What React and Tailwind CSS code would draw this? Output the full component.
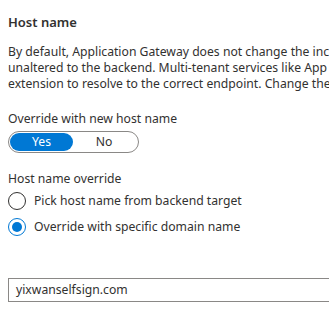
export default function App() {
  return (
    <div className="w-[329px] h-[313px] overflow-hidden bg-white text-[#323130] pl-[8px] font-['Noto_Sans',sans-serif]">
      <div className="pt-[12px] text-[13px] leading-[20px] font-semibold">Host name</div>
      <div className="mt-[12px] text-[12.2px] leading-[16px] whitespace-nowrap overflow-hidden">
        <div>By default, Application Gateway does not change the incoming</div>
        <div>unaltered to the backend. Multi-tenant services like App Service</div>
        <div>extension to resolve to the correct endpoint. Change these</div>
      </div>
      <div className="mt-[19px] text-[12.2px] leading-[16px]">Override with new host name</div>
      <div className="mt-[4px] w-[131px] h-[22px] rounded-full border border-[#8a8886] flex items-center px-[1px]">
        <div className="w-[63px] h-[18px] rounded-full bg-[#0078d4] text-white text-[12.2px] leading-[18px] flex items-center justify-center">Yes</div>
        <div className="flex-1 text-[12.2px] leading-[18px] text-center pr-[2px]">No</div>
      </div>
      <div className="mt-[18px] text-[12.2px] leading-[16px]">Host name override</div>
      <div className="mt-[5px] flex flex-col gap-[8px]">
        <div className="flex items-center h-[18px]">
          <div className="w-[18px] h-[18px] rounded-full border border-[#323130] shrink-0" />
          <span className="ml-[8px] text-[12.2px] leading-[16px]">Pick host name from backend target</span>
        </div>
        <div className="flex items-center h-[18px]">
          <div className="w-[18px] h-[18px] rounded-full border border-[#0078d4] shrink-0 flex items-center justify-center">
            <div className="w-[10px] h-[10px] rounded-full bg-[#0078d4]" />
          </div>
          <span className="ml-[8px] text-[12.2px] leading-[16px]">Override with specific domain name</span>
        </div>
      </div>
      <div className="mt-[42px] h-[24px] w-[340px] border border-[#8a8886] flex items-center pl-[7px] text-[12.2px]">yixwanselfsign.com</div>
    </div>
  );
}
